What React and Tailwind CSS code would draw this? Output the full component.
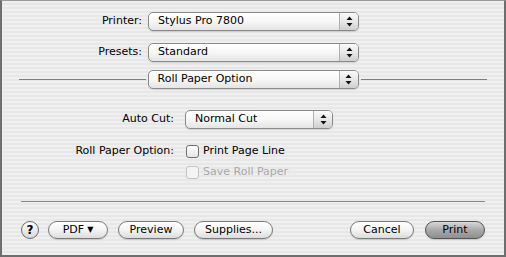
import React from 'react'

const stripes =
  'bg-[repeating-linear-gradient(to_bottom,#efefef_0px,#efefef_2px,#e7e7e7_2px,#e7e7e7_4px)]'

function Arrows() {
  return (
    <svg width="7" height="11" viewBox="0 0 7 11">
      <path d="M3.5 0.5 L6.5 4 L0.5 4 Z" fill="#111" />
      <path d="M0.5 7 L6.5 7 L3.5 10.5 Z" fill="#111" />
    </svg>
  )
}

function Popup({ label, width }) {
  return (
    <div
      className={`flex h-[19px] ${width} rounded-[5px] border border-[#8a8a8a] bg-linear-to-b from-white via-[#f7f7f7] to-[#e4e4e4] shadow-[0_1px_1px_rgba(0,0,0,0.12)]`}
    >
      <div className="flex flex-1 items-center pl-[9px] text-black">{label}</div>
      <div className="flex w-[19px] items-center justify-center rounded-r-[4px] border-l border-[#b0b0b0] bg-linear-to-b from-[#fafafa] via-[#e8e8e8] to-[#cfcfcf]">
        <Arrows />
      </div>
    </div>
  )
}

function Checkbox({ label, disabled }) {
  return (
    <div className="flex h-[16px] items-center">
      <div
        className={`h-[13px] w-[13px] rounded-[3px] border ${
          disabled ? 'border-[#c2c2c2] bg-[#f4f4f4]' : 'border-[#707070] bg-linear-to-b from-white to-[#e6e6e6]'
        }`}
      />
      <span className={`ml-[4px] ${disabled ? 'text-[#a8a8a8]' : 'text-black'}`}>{label}</span>
    </div>
  )
}

function Pill({ children, width, primary }) {
  return (
    <button
      type="button"
      className={`flex h-[18px] ${width} items-center justify-center rounded-full border ${
        primary
          ? 'border-[#555] bg-linear-to-b from-[#d9d9d9] via-[#a9a9a9] to-[#8f8f8f]'
          : 'border-[#7a7a7a] bg-linear-to-b from-white via-[#f4f4f4] to-[#dcdcdc]'
      } text-black shadow-[0_1px_1px_rgba(0,0,0,0.15)]`}
    >
      {children}
    </button>
  )
}

export default function App() {
  return (
    <div
      className={`flex h-[257px] w-[506px] flex-col border-t border-l-2 border-r-2 border-b-2 border-t-[#9a9a9a] border-l-[#6e6e6e] border-r-[#6e6e6e] border-b-[#6e6e6e] ${stripes} px-[17px] pt-[11px] text-[11px] text-black font-['DejaVu_Sans',sans-serif]`}
    >
      <div className="flex items-center">
        <div className="w-[123px] text-right">Printer:</div>
        <div className="ml-[6px]">
          <Popup label="Stylus Pro 7800" width="w-[211px]" />
        </div>
      </div>

      <div className="mt-[12px] flex items-center">
        <div className="w-[123px] text-right">Presets:</div>
        <div className="ml-[6px]">
          <Popup label="Standard" width="w-[211px]" />
        </div>
      </div>

      <div className="mt-[8px] flex items-center">
        <div className="h-px flex-1 bg-[#7d7d7d]" />
        <div className="mx-[2px]">
          <Popup label="Roll Paper Option" width="w-[211px]" />
        </div>
        <div className="h-px flex-1 bg-[#7d7d7d]" />
      </div>

      <div className="mt-[21px] flex items-center">
        <div className="w-[155px] text-right">Auto Cut:</div>
        <div className="ml-[11px]">
          <Popup label="Normal Cut" width="w-[148px]" />
        </div>
      </div>

      <div className="mt-[14px] flex items-start">
        <div className="flex h-[16px] w-[155px] items-center justify-end">Roll Paper Option:</div>
        <div className="ml-[12px] flex flex-col gap-[5px]">
          <Checkbox label="Print Page Line" />
          <Checkbox label="Save Roll Paper" disabled />
        </div>
      </div>

      <div className="mx-[2px] mt-[21px] h-px bg-[#8a8a8a]" />

      <div className="mt-[19px] flex items-center px-[2px]">
        <div className="flex h-[18px] w-[18px] items-center justify-center rounded-full border border-[#6a6a6a] bg-linear-to-b from-white to-[#d8d8d8] text-[12px] font-bold">
          ?
        </div>
        <div className="ml-[9px]">
          <Pill width="w-[60px]">
            PDF <span className="ml-[3px] text-[8px]">▼</span>
          </Pill>
        </div>
        <div className="ml-[10px]">
          <Pill width="w-[66px]">Preview</Pill>
        </div>
        <div className="ml-[10px]">
          <Pill width="w-[79px]">Supplies...</Pill>
        </div>
        <div className="flex-1" />
        <Pill width="w-[64px]">Cancel</Pill>
        <div className="ml-[11px]">
          <Pill width="w-[60px]" primary>
            Print
          </Pill>
        </div>
      </div>
    </div>
  )
}
